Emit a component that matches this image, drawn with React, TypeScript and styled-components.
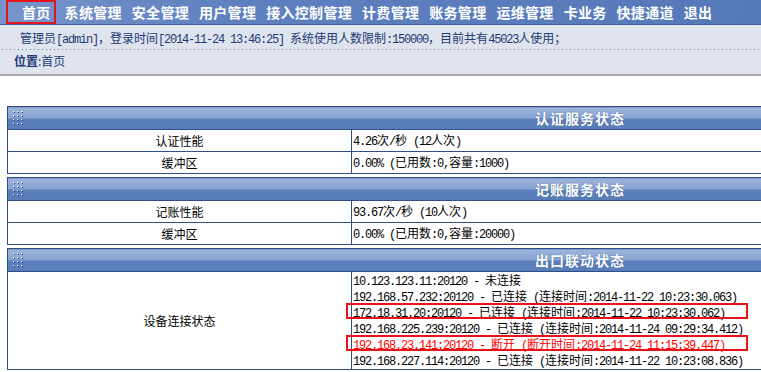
import React from 'react';
import styled, { createGlobalStyle, css } from 'styled-components';

const GlobalStyle = createGlobalStyle`
  html, body {
    margin: 0;
    padding: 0;
    overflow: hidden;
    background: #fff;
    font-family: "Noto Sans CJK SC", "Liberation Sans", sans-serif;
    font-size: 12px;
    color: #000;
  }
`;

const NAV_ITEMS = ['系统管理', '安全管理', '用户管理', '接入控制管理', '计费管理', '账务管理', '运维管理', '卡业务', '快捷通道', '退出'];

const LINKS = [
  { text: '10.123.123.11:20120 - 未连接' },
  { text: '192.168.57.232:20120 - 已连接 (连接时间:2014-11-22 10:23:30.063)' },
  { text: '172.18.31.20:20120 - 已连接 (连接时间:2014-11-22 10:23:30.062)', boxed: true },
  { text: '192.168.225.239:20120 - 已连接 (连接时间:2014-11-24 09:29:34.412)' },
  { text: '192.168.23.141:20120 - 断开 (断开时间:2014-11-24 11:15:39.447)', boxed: true, red: true },
  { text: '192.168.227.114:20120 - 已连接 (连接时间:2014-11-22 10:23:08.836)' },
];

// ascii runs get a narrow mono face, the rest stays in the CJK font
function Mixed({ text }: { text: string }) {
  return (
    <>
      {text.split(/([\x20-\x7e]+)/).map((part, i) => (
        /^[\x20-\x7e]+$/.test(part) ? <Ascii key={i}>{part}</Ascii> : part
      ))}
    </>
  );
}

function Dots() {
  const cells = [];
  for (let r = 0; r < 4; r += 1) {
    for (let c = 0; c < 3; c += 1) {
      cells.push(
        <g key={`${r}-${c}`}>
          <rect x={c * 4 + 1} y={r * 4 + 1} width="1" height="1" fill="#24406f" />
          <rect x={c * 4} y={r * 4} width="1" height="1" fill="#fff" />
        </g>,
      );
    }
  }
  return (
    <DotsSvg width="11" height="15" viewBox="0 0 11 15">
      {cells}
    </DotsSvg>
  );
}

function Head({ title }: { title: string }) {
  return (
    <>
      <colgroup>
        <LabelCol />
        <col />
      </colgroup>
      <thead>
        <tr>
          <HeadCell colSpan={2}>
            <HeadBar>
              <Dots />
              <Title>{title}</Title>
            </HeadBar>
          </HeadCell>
        </tr>
      </thead>
    </>
  );
}

function StatusBlock({ title, rows }: { title: string; rows: [string, string][] }) {
  return (
    <Block>
      <Head title={title} />
      <tbody>
        {rows.map(([label, value]) => (
          <tr key={label}>
            <Label>{label}</Label>
            <Value><Mixed text={value} /></Value>
          </tr>
        ))}
      </tbody>
    </Block>
  );
}

function App() {
  return (
    <Page>
      <GlobalStyle />
      <Top>
        <Nav>
          <NavItem $active>首页</NavItem>
          {NAV_ITEMS.map((item) => <NavItem key={item}>{item}</NavItem>)}
        </Nav>
        <Info>
          <Mixed text="管理员[admin]，登录时间[2014-11-24 13:46:25] 系统使用人数限制:150000，目前共有45023人使用；" />
        </Info>
        <Location>
          <b>位置</b>:首页
        </Location>
      </Top>
      <Content>
        <StatusBlock
          title="认证服务状态"
          rows={[['认证性能', '4.26次/秒 (12人次)'], ['缓冲区', '0.00% (已用数:0,容量:1000)']]}
        />
        <StatusBlock
          title="记账服务状态"
          rows={[['记账性能', '93.67次/秒 (10人次)'], ['缓冲区', '0.00% (已用数:0,容量:20000)']]}
        />
        <Block>
          <Head title="出口联动状态" />
          <tbody>
            <tr>
              <Label>设备连接状态</Label>
              <Value>
                {LINKS.map((l) => (
                  <Line key={l.text} $red={l.red} $boxed={l.boxed}>
                    <Mixed text={l.text} />
                  </Line>
                ))}
              </Value>
            </tr>
          </tbody>
        </Block>
      </Content>
    </Page>
  );
}

const Page = styled.div`
  width: 1160px;
`;
const Top = styled.div`
  border-bottom: 2px solid #a7a9ad;
  background: #dfe3ec;
`;
const Nav = styled.div`
  display: flex;
  align-items: center;
  height: 24px;
  padding-left: 6px;
  background: linear-gradient(100deg, #7895cb 0%, #5f80bf 20%, #4f73b4 100%);
  border-bottom: 1px solid #3e5f9f;
`;
const NavItem = styled.div<{ $active?: boolean }>`
  padding: 0 5px;
  color: #fff;
  font-size: 14px;
  font-weight: bold;
  letter-spacing: 0.3px;
  line-height: 20px;
  white-space: nowrap;
  ${(p) => p.$active && css`
    border: 2px solid #e4141b;
    padding: 0 3px 0 14px;
    margin-right: 4px;
  `}
`;
const Info = styled.div`
  height: 25px;
  line-height: 25px;
  padding-left: 20px;
  color: #1d3a78;
  background-image: linear-gradient(to right, #6b7896 1px, transparent 1px);
  background-size: 4px 1px;
  background-repeat: repeat-x;
  background-position: 2px bottom;
`;
const Location = styled.div`
  height: 24px;
  line-height: 22px;
  padding-left: 14px;
  color: #1d3a78;
  b {
    font-weight: bold;
  }
`;
const Ascii = styled.span`
  font-family: "Liberation Mono", "DejaVu Sans Mono", monospace;
  font-size: 12px;
  letter-spacing: -1.2px;
`;
const Content = styled.div`
  padding: 30px 0 0 7px;
`;
const Block = styled.table`
  width: 1146px;
  table-layout: fixed;
  border-collapse: collapse;
  margin-bottom: 3px;
  td, th {
    border: 1px solid #2e4f8b;
    padding: 0;
  }
`;
const LabelCol = styled.col`
  width: 344px;
`;
const HeadCell = styled.th`
  height: 22px;
  background: linear-gradient(to bottom, #9fb5da 0%, #86a2d1 48%, #5b7fba 50%, #5a7db8 100%);
`;
const HeadBar = styled.div`
  display: grid;
  grid-template-columns: 1fr auto 1fr;
  align-items: center;
`;
const DotsSvg = styled.svg`
  display: block;
  margin-left: 5px;
`;
const Title = styled.span`
  color: #fff;
  font-size: 14px;
  font-weight: bold;
  letter-spacing: 1px;
  text-shadow: 0 0 1px #2f4f86;
`;
const Label = styled.td`
  height: 21px;
  text-align: center;
  vertical-align: middle;
`;
const Value = styled.td`
  padding: 0 0 1px 1px !important;
  vertical-align: middle;
`;
const Line = styled.div<{ $red?: boolean; $boxed?: boolean }>`
  position: relative;
  height: 16px;
  line-height: 16px;
  white-space: nowrap;
  color: ${(p) => (p.$red ? '#ff0000' : '#000')};
  ${(p) => p.$boxed && css`
    &::after {
      content: '';
      position: absolute;
      left: -7px;
      top: -1px;
      width: 402px;
      height: 16px;
      border: 2px solid #ea1219;
      box-sizing: border-box;
    }
  `}
`;

export default App;
